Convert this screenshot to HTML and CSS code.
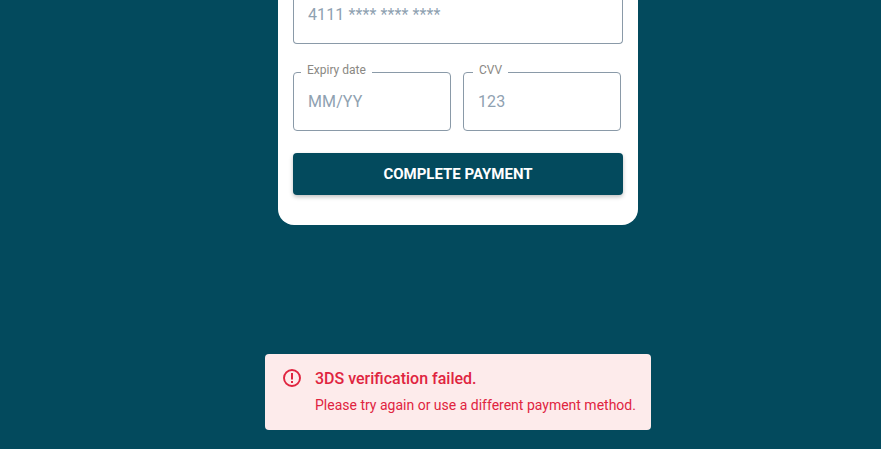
FILE: index.html
```html
<!DOCTYPE html>
<html lang="en">
<head>
  <meta charset="UTF-8" />
  <title>Payment</title>
  <meta name="viewport" content="width=device-width, initial-scale=1" />
  <link rel="stylesheet" href="styles.css">
</head>
<body>

  <!-- Payment card, top part is scrolled out of view -->
  <main class="stage">
    <form class="card">
      <div class="field field-wide">
        <input type="text" placeholder="4111 **** **** ****" />
      </div>
      <div class="field-row">
        <div class="field">
          <span class="field-label">Expiry date</span>
          <input type="text" placeholder="MM/YY" />
        </div>
        <div class="field">
          <span class="field-label field-label-cvv">CVV</span>
          <input type="text" placeholder="123" />
        </div>
      </div>
      <button type="button" class="pay-button">COMPLETE PAYMENT</button>
    </form>
  </main>

  <!-- Error toast -->
  <div class="toast">
    <svg class="toast-icon" viewBox="0 0 20 20" width="20" height="20" aria-hidden="true">
      <circle cx="10" cy="10" r="8" fill="none" stroke="currentColor" stroke-width="1.9" />
      <path d="M10 5v6.4" fill="none" stroke="currentColor" stroke-width="2" />
      <rect x="9" y="13" width="2" height="2" fill="currentColor" />
    </svg>
    <div class="toast-text">
      <div class="toast-title">3DS verification failed.</div>
      <div class="toast-message">Please try again or use a different payment method.</div>
    </div>
  </div>

</body>
</html>
```

FILE: styles.css
```css
:root {
  --teal: #034a5d;
  --error: #e0243f;
  --border: #8a9aa8;
}

* {
  box-sizing: border-box;
}

html,
body {
  height: 100%;
}

body {
  margin: 0;
  overflow: hidden;
  position: relative;
  background: var(--teal);
  font-family: Roboto, Arial, sans-serif;
}

.stage {
  height: 225px;
  padding-left: 278px;
  display: flex;
  align-items: flex-end;
}

.card {
  width: 360px;
  padding: 0 15px 30px;
  background: white;
  border-radius: 0 0 16px 16px;
}

.field {
  position: relative;
  height: 59px;
  border: 1px solid var(--border);
  border-radius: 4px;
}

.field-wide {
  border-top: none;
  height: 44px;
  border-top-left-radius: 0;
  border-top-right-radius: 0;
}

.field input {
  width: 100%;
  height: 100%;
  padding: 0 14px;
  border: none;
  outline: none;
  background: transparent;
  font-family: inherit;
  font-size: 16px;
  letter-spacing: 0.1px;
}

.field-wide input {
  height: 28px;
}

.field input::placeholder {
  color: #8fa1b1;
  opacity: 1;
}

.field-label {
  position: absolute;
  top: -11px;
  left: 7px;
  padding: 0 6px;
  background: white;
  color: #8a8883;
  font-size: 12px;
  line-height: 16px;
}

.field-label-cvv {
  left: 9px;
}

.field-row {
  display: grid;
  grid-template-columns: 158px 158px;
  gap: 12px;
  margin-top: 28px;
}

.pay-button {
  display: block;
  width: 100%;
  height: 42px;
  margin-top: 22px;
  border: none;
  border-radius: 4px;
  background: var(--teal);
  color: white;
  font-family: inherit;
  font-size: 15px;
  font-weight: 700;
  box-shadow: 0 2px 4px rgba(0,0,0,0.25);
}

.toast {
  position: absolute;
  left: 265px;
  top: 354px;
  width: 386px;
  height: 76px;
  display: flex;
  gap: 13px;
  padding: 15px 15px 0 17px;
  background: #fdebeb;
  border-radius: 4px;
  color: var(--error);
}

.toast-icon {
  flex: none;
  margin-top: -1px;
}

.toast-title {
  font-size: 16px;
  font-weight: 500;
  line-height: 20px;
}

.toast-message {
  margin-top: 6px;
  font-size: 14px;
  line-height: 20px;
}
```
